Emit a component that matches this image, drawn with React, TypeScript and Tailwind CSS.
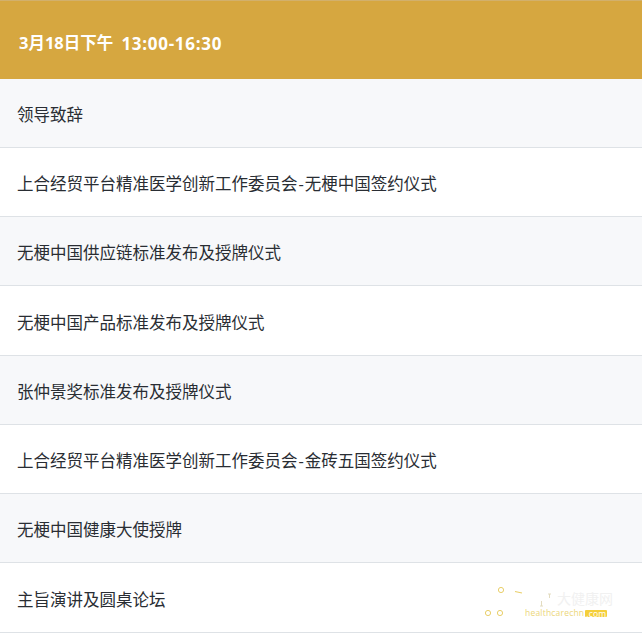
import React from 'react';

const rows = [
  '领导致辞',
  '上合经贸平台精准医学创新工作委员会-无梗中国签约仪式',
  '无梗中国供应链标准发布及授牌仪式',
  '无梗中国产品标准发布及授牌仪式',
  '张仲景奖标准发布及授牌仪式',
  '上合经贸平台精准医学创新工作委员会-金砖五国签约仪式',
  '无梗中国健康大使授牌',
  '主旨演讲及圆桌论坛',
];

// faint site watermark in the bottom right corner
const Watermark = () => (
  <div className="absolute left-[484px] top-[586px] w-[130px] h-[34px]">
    <svg width="130" height="34" viewBox="0 0 130 34" className="absolute left-0 top-0">
      <g fill="none" stroke="#e9cf6a" strokeWidth="1">
        <circle cx="17" cy="4" r="2.6" />
        <circle cx="4" cy="27" r="2.6" />
        <circle cx="16" cy="27" r="2.6" />
      </g>
      <path d="M31 5.500l7 1.500" stroke="#e9cf6a" strokeWidth="1.2" fill="none" />
      <path d="M64 8h3M65.500 8v4M56 20h3M57.500 15v5" stroke="#e3dcc0" strokeWidth="1" fill="none" />
    </svg>
    <span className="absolute left-[73px] top-[4px] text-[14px] leading-[18px] text-[#f1f1f1] whitespace-nowrap">大健康网</span>
    <span className="absolute left-[41px] top-[21px] text-[8.5px] leading-[12px] text-[#ecd679] whitespace-nowrap flex items-center tracking-[0.2px]">
      healthcarechn
      <span className="bg-[#f5cf3a] text-white px-[1px] leading-[7px] rounded-[1px] ml-[1px]">.com</span>
    </span>
  </div>
);

export default function App() {
  return (
    <div className="relative w-[642px] h-[634px] bg-white overflow-hidden font-['Open_Sans','Noto_Sans_CJK_SC',sans-serif] text-[16.5px]">
      <div className="flex items-center h-[78.500px] pl-[19px] pt-[11px] pb-[4px] bg-[#d6a740] border-t border-[#d2b06c] text-white font-bold text-[16.5px] whitespace-pre">
        3月18日下午<span className="ml-[3px] text-[17px] tracking-[0.7px]"> 13:00-16:30</span>
      </div>
      <div className="flex flex-col">
        {rows.map((text, i) => {
          const [before, after] = text.split('-');
          return (
            <div
              key={text}
              className={`flex items-center h-[69.250px] pl-[17px] pt-[5px] border-b border-[#dee2e6] text-[#292d33] ${i % 2 === 0 ? 'bg-[#f7f8fa]' : 'bg-white'}`}
            >
              <span>
                {before}
                {after && <span className="mx-[1px]">-</span>}
                {after}
              </span>
            </div>
          );
        })}
      </div>
      <Watermark />
    </div>
  );
}
